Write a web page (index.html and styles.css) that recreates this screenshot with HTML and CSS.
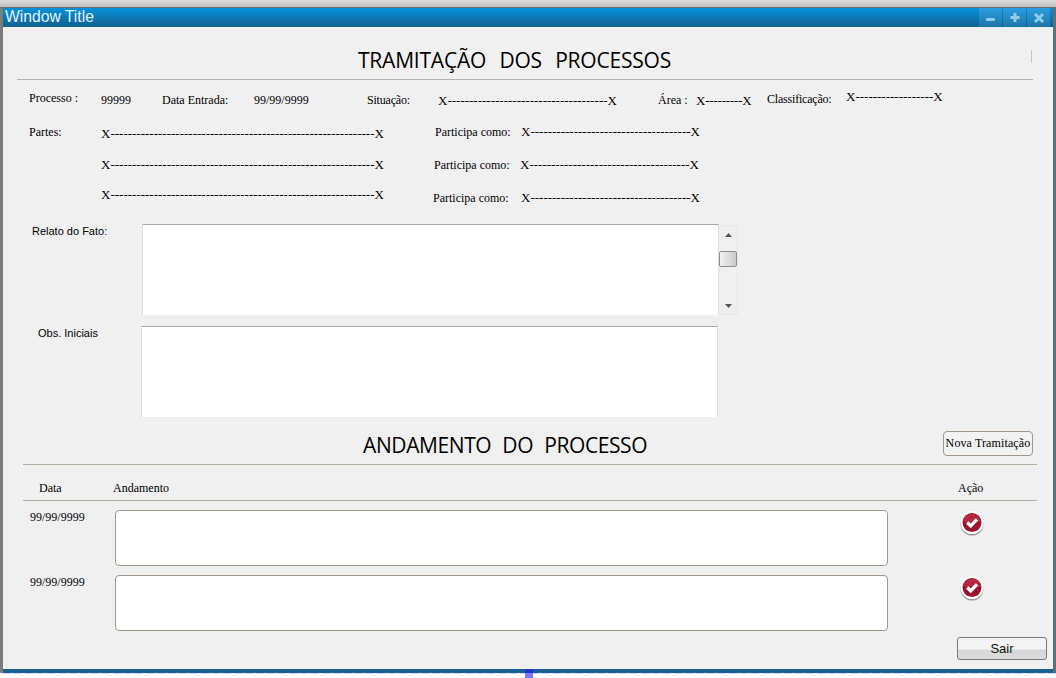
FILE: index.html
```html
<!DOCTYPE html>
<html lang="pt">
<head>
<meta charset="utf-8">
<title>Window Title</title>
<link rel="stylesheet" href="styles.css">
</head>
<body>
<div class="topstrip"></div>
<main class="window">
  <header class="titlebar">
    <span class="wintitle">Window Title</span>
    <div class="winbtns">
      <button class="winbtn" aria-label="Minimizar"><svg width="12" height="12" viewBox="0 0 12 12"><rect x="1" y="6" width="9" height="3" rx="1" fill="#8fcbea"/></svg></button>
      <button class="winbtn" aria-label="Maximizar"><svg width="12" height="12" viewBox="0 0 12 12"><path d="M4.5 1h3v3h3v3h-3v3h-3v-3h-3v-3h3z" fill="#8fcbea"/></svg></button>
      <button class="winbtn" aria-label="Fechar"><svg width="12" height="12" viewBox="0 0 12 12"><path d="M2 2l8 8M10 2l-8 8" stroke="#8fcbea" stroke-width="3" fill="none"/></svg></button>
    </div>
  </header>

  <div class="content">
    <div class="head-one">
      <h1 class="title title-one">TRAMITAÇÃO DOS PROCESSOS</h1>
      <span class="tick"></span>
    </div>

    <section class="info">
      <div class="row row-a">
        <span class="cell w-processo up2">Processo :</span>
        <span class="cell w-num">99999</span>
        <span class="cell w-data">Data Entrada:</span>
        <span class="cell w-dataval">99/99/9999</span>
        <span class="cell w-sit tight">Situação:</span>
        <span class="cell w-sitval mono down1">X-------------------------------------X</span>
        <span class="cell w-area">Área :</span>
        <span class="cell w-areaval mono down1 tight">X---------X</span>
        <span class="cell w-class up1 tight">Classificação:</span>
        <span class="cell mono up3">X------------------X</span>
      </div>
      <div class="row row-b">
        <span class="cell w-processo up2">Partes:</span>
        <span class="cell w-parte mono">X-------------------------------------------------------------X</span>
        <span class="cell w-part1 up2">Participa como:</span>
        <span class="cell mono up2">X-------------------------------------X</span>
      </div>
      <div class="row row-c">
        <span class="cell w-first"></span>
        <span class="cell w-parte2 mono">X-------------------------------------------------------------X</span>
        <span class="cell w-part2">Participa como:</span>
        <span class="cell mono">X-------------------------------------X</span>
      </div>
      <div class="row row-d">
        <span class="cell w-first"></span>
        <span class="cell w-parte3 mono">X-------------------------------------------------------------X</span>
        <span class="cell w-part3 down">Participa como:</span>
        <span class="cell mono down">X-------------------------------------X</span>
      </div>
    </section>

    <div class="field field-relato">
      <label class="flabel">Relato do Fato:</label>
      <div class="area area-one"></div>
      <div class="scroll">
        <svg class="arrow" width="7" height="4" viewBox="0 0 7 4"><path d="M3.5 0L7 4H0z" fill="#555"/></svg>
        <span class="thumb"></span>
        <svg class="arrow arrow-down" width="7" height="4" viewBox="0 0 7 4"><path d="M0 0h7L3.5 4z" fill="#555"/></svg>
      </div>
    </div>
    <div class="field field-obs">
      <label class="flabel flabel-obs">Obs. Iniciais</label>
      <div class="area area-two"></div>
    </div>

    <div class="head-two">
      <h2 class="title title-two">ANDAMENTO DO PROCESSO</h2>
      <button class="nova">Nova Tramitação</button>
    </div>

    <div class="thead">
      <span class="th-data">Data</span>
      <span class="th-and">Andamento</span>
      <span class="th-acao">Ação</span>
    </div>

    <div class="trow trow-first">
      <span class="td-data">99/99/9999</span>
      <div class="box"></div>
      <svg class="check" width="24" height="26" viewBox="0 0 24 26">
        <circle cx="12" cy="14" r="11.5" fill="#555" opacity=".55"/>
        <circle cx="12" cy="12.5" r="11.5" fill="#fff"/>
        <circle cx="12" cy="12.5" r="9.5" fill="#9c132a"/>
        <path d="M2.8 11a9.5 9.5 0 0 1 18.4 0q-9.2 3-18.4 0z" fill="#c43a50" opacity=".6"/>
        <path d="M7.2 12.5l3.5 3.4 6.3-6.6" stroke="#fff" stroke-width="3.2" fill="none"/>
      </svg>
    </div>
    <div class="trow">
      <span class="td-data">99/99/9999</span>
      <div class="box"></div>
      <svg class="check" width="24" height="26" viewBox="0 0 24 26">
        <circle cx="12" cy="14" r="11.5" fill="#555" opacity=".55"/>
        <circle cx="12" cy="12.5" r="11.5" fill="#fff"/>
        <circle cx="12" cy="12.5" r="9.5" fill="#9c132a"/>
        <path d="M2.8 11a9.5 9.5 0 0 1 18.4 0q-9.2 3-18.4 0z" fill="#c43a50" opacity=".6"/>
        <path d="M7.2 12.5l3.5 3.4 6.3-6.6" stroke="#fff" stroke-width="3.2" fill="none"/>
      </svg>
    </div>

    <div class="foot"><button class="sair">Sair</button></div>
  </div>
</main>
<div class="dashes"></div>
<span class="marker"></span>
</body>
</html>
```

FILE: styles.css
```css
* { box-sizing: border-box; }
html, body { margin: 0; padding: 0; }
body {
  position: relative;
  width: 1056px;
  height: 678px;
  overflow: hidden;
  background: #fff;
  font-family: "Liberation Serif", serif;
  font-size: 12px;
  color: #000;
}
.topstrip {
  height: 7px;
  background: linear-gradient(#dcdcdc, #bdbdbd);
}
.window {
  height: 666px;
  border-left: 3px solid #7d7d7d;
  border-right: 3px solid #5f6f7a;
  border-top: 1px solid #6d6d6d;
  background: #f0f0f0;
  display: flex;
  flex-direction: column;
}
.titlebar {
  height: 19px;
  flex: none;
  display: flex;
  justify-content: space-between;
  background: linear-gradient(#0592da, #12608e);
}
.wintitle {
  font-family: "Liberation Sans", sans-serif;
  font-size: 15.7px;
  line-height: 18px;
  padding-left: 2px;
  color: #e6f3fb;
}
.winbtns { display: flex; gap: 1px; padding-right: 3px; }
.winbtn {
  width: 23px;
  height: 19px;
  margin: 0;
  padding: 0;
  border: 0;
  display: flex;
  align-items: center;
  justify-content: center;
  background: linear-gradient(#2a9ee0, #1d76a9);
}
.content { flex: 1; display: flex; flex-direction: column; border-bottom: 4px solid #16618f; }

.title {
  margin: 0;
  font-family: "Open Sans", sans-serif;
  font-weight: 400;
  font-size: 21px;
  color: #000;
  word-spacing: 8px;
  letter-spacing: -.2px;
  white-space: nowrap;
  flex: none;
}
.head-one {
  height: 53px;
  margin: 0 20px 0 14px;
  padding-right: 21px;
  display: flex;
  align-items: flex-end;
  justify-content: center;
  border-bottom: 1px solid #b5b2aa;
  position: relative;
}
.title-one { line-height: 30px; padding-bottom: 4px; }
.tick {
  position: absolute;
  right: 1px;
  top: 23px;
  width: 1px;
  height: 13px;
  background: #c9c6bd;
}

.info { padding-left: 26px; }
.row { display: flex; align-items: flex-start; }
.row-a { margin-top: 13px; height: 23px; }
.row-b { margin-top: 11px; height: 31px; }
.row-c { height: 30px; }
.row-d { height: 29px; }
.cell { display: block; line-height: 14px; white-space: nowrap; flex: none; }
.mono { font-size: 13px; }
.up1 { margin-top: -1px; }
.up2 { margin-top: -2px; }
.up3 { margin-top: -3px; }
.down1 { margin-top: 1px; }
.down { margin-top: 3px; }
.tight { letter-spacing: -.2px; }
.w-processo { width: 72px; }
.w-num { width: 61px; }
.w-data { width: 92px; }
.w-dataval { width: 113px; }
.w-sit { width: 71px; }
.w-sitval { width: 220px; }
.w-area { width: 38px; }
.w-areaval { width: 71px; }
.w-class { width: 79px; }
.w-first { width: 72px; }
.w-parte { width: 334px; }
.w-parte2 { width: 333px; }
.w-parte3 { width: 332px; }
.w-part1 { width: 86px; }
.w-part2 { width: 86px; }
.w-part3 { width: 88px; }

.field { display: flex; align-items: flex-start; }
.flabel {
  font-family: "Liberation Sans", sans-serif;
  font-size: 11px;
  line-height: 14px;
  width: 139px;
  padding: 0 0 0 29px;
  margin-top: 0;
}
.flabel-obs { width: 138px; padding-left: 35px; }
.field-relato { margin-top: 7px; height: 91px; }
.field-obs { margin-top: 11px; height: 91px; }
.area {
  width: 577px;
  height: 91px;
  background: #fff;
  border-top: 1px solid #a9a9a9;
  border-left: 1px solid #dcdce4;
  border-right: 1px solid #dcdce4;
}
.scroll {
  width: 19px;
  height: 90px;
  margin-top: 1px;
  background: #efefef;
  border: 1px solid #e8e8e8;
  border-left: 0;
  display: flex;
  flex-direction: column;
  align-items: center;
}
.arrow { margin-top: 7px; flex: none; }
.thumb {
  width: 18px;
  height: 16px;
  margin-top: 14px;
  flex: none;
  align-self: flex-start;
  border: 1px solid #8e8e8e;
  border-radius: 2px;
  background: linear-gradient(90deg, #f2f2f2, #c9c9c9);
}
.arrow-down { margin-top: 37px; }

.head-two {
  height: 48px;
  margin: 0 16px 0 20px;
  border-bottom: 1px solid #b5aea0;
  display: flex;
  align-items: flex-start;
}
.title-two { line-height: 30px; margin: 13px 0 0 340px; letter-spacing: -.4px; word-spacing: 6px; }
.nova {
  margin: 14px 4px 0 auto;
  width: 90px;
  height: 25px;
  padding: 0;
  border: 1px solid #a1968a;
  border-radius: 4px;
  background: #f2f2f2;
  font-family: "Liberation Serif", serif;
  font-size: 12px;
  letter-spacing: .12px;
  color: #000;
}
.thead {
  height: 36px;
  padding-top: 10px;
  margin: 0 16px 0 20px;
  border-bottom: 1px solid #b5aea0;
  display: flex;
  align-items: center;
  line-height: 14px;
}
.th-data { width: 90px; padding-left: 16px; }
.th-and { width: 845px; }
.th-acao { width: 40px; }
.trow { display: flex; align-items: flex-start; height: 65px; padding-left: 27px; }
.trow-first { margin-top: 9px; }
.td-data { width: 85px; line-height: 14px; margin-top: 0; }
.box {
  width: 773px;
  height: 56px;
  background: #fff;
  border: 1px solid #a1968a;
  border-radius: 4px;
}
.check { margin: 0 0 0 72px; flex: none; }
.foot { display: flex; justify-content: flex-end; padding-right: 6px; margin-top: -3px; }
.sair {
  width: 90px;
  height: 23px;
  padding: 0;
  border: 1px solid #7a7a7a;
  border-radius: 3px;
  background: linear-gradient(#f3f3f3 50%, #d6d6d6 60%, #dcdcdc);
  font-family: "Liberation Sans", sans-serif;
  font-size: 13px;
  color: #111;
}
.dashes {
  height: 1px;
  background: repeating-linear-gradient(90deg, #d5d5ff 0 8px, #fff 8px 11px);
  margin-left: 3px;
}
.marker {
  position: absolute;
  left: 525px;
  top: 669px;
  width: 8px;
  height: 9px;
  background: linear-gradient(#1f33d8 45%, #7a7aff 45%);
}
```
